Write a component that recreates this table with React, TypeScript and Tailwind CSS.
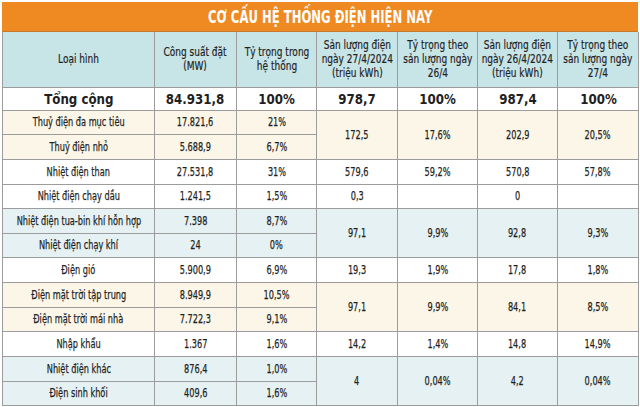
import React from "react";

type Row = {
  name: string;
  mw: string;
  share: string;
  bg: string;
  // output columns; rows under a rowspan leave this out
  out?: [string, string, string, string];
  span?: number;
};

const rows: Row[] = [
  { name: "Thuỷ điện đa mục tiêu", mw: "17.821,6", share: "21%", bg: "bg-[#fbf6e7]", out: ["172,5", "17,6%", "202,9", "20,5%"], span: 2 },
  { name: "Thuỷ điện nhỏ", mw: "5.688,9", share: "6,7%", bg: "bg-[#fbf6e7]" },
  { name: "Nhiệt điện than", mw: "27.531,8", share: "31%", bg: "bg-white", out: ["579,6", "59,2%", "570,8", "57,8%"] },
  { name: "Nhiệt điện chạy dầu", mw: "1.241,5", share: "1,5%", bg: "bg-white", out: ["0,3", "", "0", ""] },
  { name: "Nhiệt điện tua-bin khí hỗn hợp", mw: "7.398", share: "8,7%", bg: "bg-[#e5f1f2]", out: ["97,1", "9,9%", "92,8", "9,3%"], span: 2 },
  { name: "Nhiệt điện chạy khí", mw: "24", share: "0%", bg: "bg-[#e5f1f2]" },
  { name: "Điện gió", mw: "5.900,9", share: "6,9%", bg: "bg-white", out: ["19,3", "1,9%", "17,8", "1,8%"] },
  { name: "Điện mặt trời tập trung", mw: "8.949,9", share: "10,5%", bg: "bg-[#fbf6e7]", out: ["97,1", "9,9%", "84,1", "8,5%"], span: 2 },
  { name: "Điện mặt trời mái nhà", mw: "7.722,3", share: "9,1%", bg: "bg-[#fbf6e7]" },
  { name: "Nhập khẩu", mw: "1.367", share: "1,6%", bg: "bg-white", out: ["14,2", "1,4%", "14,8", "14,9%"] },
  { name: "Nhiệt điện khác", mw: "876,4", share: "1,0%", bg: "bg-[#e5f1f2]", out: ["4", "0,04%", "4,2", "0,04%"], span: 2 },
  { name: "Điện sinh khối", mw: "409,6", share: "1,6%", bg: "bg-[#e5f1f2]" },
];

const heights = ["h-[24px]", "h-[25px]", "h-[25px]", "h-[24px]", "h-[25px]", "h-[24px]", "h-[25px]", "h-[25px]", "h-[24px]", "h-[25px]", "h-[25px]", "h-[24px]"];

const cell = "border border-[#9c9c9c] p-0 text-center align-middle";

// the print uses a condensed face; DejaVu Condensed squeezed a bit further
const Txt = ({ children }: { children: React.ReactNode }) => (
  <div className="flex justify-center">
    <span className="shrink-0 whitespace-nowrap scale-x-[0.7] [-webkit-text-stroke:0.25px_#1f1f1f]">{children}</span>
  </div>
);

const Head = ({ lines }: { lines: string[] }) => (
  <th className={`${cell} font-normal border-t-0`}>
    <div className="flex justify-center">
      <span className="shrink-0 whitespace-nowrap scale-x-[0.77] text-[13px] leading-[14px] [-webkit-text-stroke:0.2px_#1f1f1f]">
        {lines.map((l, i) => (
          <React.Fragment key={i}>
            {i > 0 && <br />}
            {l}
          </React.Fragment>
        ))}
      </span>
    </div>
  </th>
);

export default function App() {
  return (
    <div
      className="w-[640px] h-[407px] bg-white pl-[2px] pt-[2px] text-[#1f1f1f] text-[13px] leading-[14px]"
      style={{ fontFamily: '"DejaVu Sans Condensed", "Liberation Sans Narrow", Roboto, sans-serif', fontStretch: "condensed" }}
    >
      <div className="w-[636px] h-[30px] bg-[#ef8a22] border-b border-[#c77a2f] flex items-center justify-center">
        <span className="shrink-0 whitespace-nowrap scale-x-[0.7] text-white font-bold text-[18.5px]">
          CƠ CẤU HỆ THỐNG ĐIỆN HIỆN NAY
        </span>
      </div>
      <table className="table-fixed border-collapse w-[636px]">
        <colgroup>
          <col className="w-[152px]" />
          <col className="w-[82px]" />
          <col className="w-[80px]" />
          <col className="w-[81px]" />
          <col className="w-[80px]" />
          <col className="w-[80px]" />
          <col className="w-[81px]" />
        </colgroup>
        <thead>
          <tr className="h-[55px] bg-[#c7e4e7]">
            <Head lines={["Loại hình"]} />
            <Head lines={["Công suất đặt", "(MW)"]} />
            <Head lines={["Tỷ trọng trong", "hệ thống"]} />
            <Head lines={["Sản lượng điện", "ngày 27/4/2024", "(triệu kWh)"]} />
            <Head lines={["Tỷ trọng theo", "sản lượng ngày", "26/4"]} />
            <Head lines={["Sản lượng điện", "ngày 26/4/2024", "(triệu kWh)"]} />
            <Head lines={["Tỷ trọng theo", "sản lượng ngày", "27/4"]} />
          </tr>
        </thead>
        <tbody>
          <tr className="h-[23px] bg-white font-bold text-[14px]">
            {["Tổng cộng", "84.931,8", "100%", "978,7", "100%", "987,4", "100%"].map((v, i) => (
              <td key={i} className={cell}>
                <div className="flex justify-center">
                  <span className="shrink-0 whitespace-nowrap scale-x-[0.94]">{v}</span>
                </div>
              </td>
            ))}
          </tr>
          {rows.map((r, i) => (
            <tr key={r.name} className={`${heights[i]} ${r.bg}`}>
              <td className={cell}><Txt>{r.name}</Txt></td>
              <td className={cell}><Txt>{r.mw}</Txt></td>
              <td className={cell}><Txt>{r.share}</Txt></td>
              {r.out &&
                r.out.map((v, j) => (
                  <td key={j} rowSpan={r.span ?? 1} className={cell}>
                    <Txt>{v}</Txt>
                  </td>
                ))}
            </tr>
          ))}
        </tbody>
      </table>
    </div>
  );
}
